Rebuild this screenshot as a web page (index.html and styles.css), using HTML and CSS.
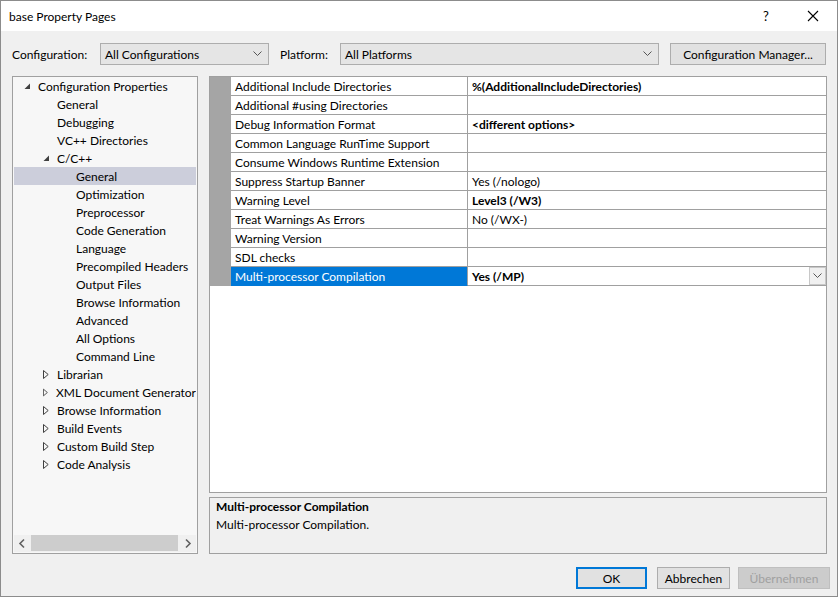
FILE: index.html
```html
<!DOCTYPE html>
<html>
<head>
<meta charset="utf-8">
<link rel="stylesheet" href="styles.css">
</head>
<body>
<div class="window">
  <div class="titlebar">
    <span class="title">base Property Pages</span>
    <span class="tb-help">?</span>
    <span class="tb-close"><svg width="12" height="12" viewBox="0 0 12 12"><path d="M1 1L11 11M11 1L1 11" stroke="#000" stroke-width="1.1" fill="none"/></svg></span>
  </div>
  <div class="body">
    <div class="configrow">
      <span class="lbl">Configuration:</span>
      <div class="combo combo-config"><span>All Configurations</span><svg class="chev" width="9" height="6" viewBox="0 0 9 6"><path d="M0.5 0.5L4.5 4.5L8.5 0.5" stroke="#555" fill="none"/></svg></div>
      <span class="lbl lbl-plat">Platform:</span>
      <div class="combo combo-plat"><span>All Platforms</span><svg class="chev" width="9" height="6" viewBox="0 0 9 6"><path d="M0.5 0.5L4.5 4.5L8.5 0.5" stroke="#555" fill="none"/></svg></div>
      <div class="btn btn-cfgmgr">Configuration Manager...</div>
    </div>
    <div class="main">
      <div class="tree">
        <div class="tree-items">
          <div class="ti l0"><svg class="exp" width="7" height="7" viewBox="0 0 7 7"><path d="M6 0.5V6H0.5Z" fill="#404040"/></svg><span>Configuration Properties</span></div>
          <div class="ti l1"><span>General</span></div>
          <div class="ti l1"><span>Debugging</span></div>
          <div class="ti l1"><span>VC++ Directories</span></div>
          <div class="ti l1 node"><svg class="exp" width="7" height="7" viewBox="0 0 7 7"><path d="M6 0.5V6H0.5Z" fill="#404040"/></svg><span>C/C++</span></div>
          <div class="ti l2 sel"><span>General</span></div>
          <div class="ti l2"><span>Optimization</span></div>
          <div class="ti l2"><span>Preprocessor</span></div>
          <div class="ti l2"><span>Code Generation</span></div>
          <div class="ti l2"><span>Language</span></div>
          <div class="ti l2"><span>Precompiled Headers</span></div>
          <div class="ti l2"><span>Output Files</span></div>
          <div class="ti l2"><span>Browse Information</span></div>
          <div class="ti l2"><span>Advanced</span></div>
          <div class="ti l2"><span>All Options</span></div>
          <div class="ti l2"><span>Command Line</span></div>
          <div class="ti l1 node"><svg class="col" width="6" height="9" viewBox="0 0 6 9"><path d="M0.5 0.5L5.2 4.5L0.5 8.5Z" fill="none" stroke="#404040"/></svg><span>Librarian</span></div>
          <div class="ti l1 node"><svg class="col" width="6" height="9" viewBox="0 0 6 9"><path d="M0.5 0.5L5.2 4.5L0.5 8.5Z" fill="none" stroke="#404040"/></svg><span>XML Document Generator</span></div>
          <div class="ti l1 node"><svg class="col" width="6" height="9" viewBox="0 0 6 9"><path d="M0.5 0.5L5.2 4.5L0.5 8.5Z" fill="none" stroke="#404040"/></svg><span>Browse Information</span></div>
          <div class="ti l1 node"><svg class="col" width="6" height="9" viewBox="0 0 6 9"><path d="M0.5 0.5L5.2 4.5L0.5 8.5Z" fill="none" stroke="#404040"/></svg><span>Build Events</span></div>
          <div class="ti l1 node"><svg class="col" width="6" height="9" viewBox="0 0 6 9"><path d="M0.5 0.5L5.2 4.5L0.5 8.5Z" fill="none" stroke="#404040"/></svg><span>Custom Build Step</span></div>
          <div class="ti l1 node"><svg class="col" width="6" height="9" viewBox="0 0 6 9"><path d="M0.5 0.5L5.2 4.5L0.5 8.5Z" fill="none" stroke="#404040"/></svg><span>Code Analysis</span></div>
        </div>
        <div class="hscroll">
          <svg class="sarrow" width="17" height="17" viewBox="0 0 17 17"><path d="M10 4.5L6 8.5L10 12.5" stroke="#606060" stroke-width="1.6" fill="none"/></svg>
          <div class="strack"><div class="sthumb"></div></div>
          <svg class="sarrow" width="17" height="17" viewBox="0 0 17 17"><path d="M7 4.5L11 8.5L7 12.5" stroke="#606060" stroke-width="1.6" fill="none"/></svg>
        </div>
      </div>
      <div class="rightcol">
        <div class="grid">
          <div class="rows">
            <div class="row"><div class="gut"></div><div class="nm">Additional Include Directories</div><div class="vl b">%(AdditionalIncludeDirectories)</div></div>
            <div class="row"><div class="gut"></div><div class="nm">Additional #using Directories</div><div class="vl"></div></div>
            <div class="row"><div class="gut"></div><div class="nm">Debug Information Format</div><div class="vl b">&lt;different options&gt;</div></div>
            <div class="row"><div class="gut"></div><div class="nm">Common Language RunTime Support</div><div class="vl"></div></div>
            <div class="row"><div class="gut"></div><div class="nm">Consume Windows Runtime Extension</div><div class="vl"></div></div>
            <div class="row"><div class="gut"></div><div class="nm">Suppress Startup Banner</div><div class="vl">Yes (/nologo)</div></div>
            <div class="row"><div class="gut"></div><div class="nm">Warning Level</div><div class="vl b">Level3 (/W3)</div></div>
            <div class="row"><div class="gut"></div><div class="nm">Treat Warnings As Errors</div><div class="vl">No (/WX-)</div></div>
            <div class="row"><div class="gut"></div><div class="nm">Warning Version</div><div class="vl"></div></div>
            <div class="row"><div class="gut"></div><div class="nm">SDL checks</div><div class="vl"></div></div>
            <div class="row selrow"><div class="gut"></div><div class="nm">Multi-processor Compilation</div><div class="vl b"><span class="grow">Yes (/MP)</span><div class="ddbtn"><svg width="9" height="6" viewBox="0 0 9 6"><path d="M0.5 0.5L4.5 4.5L8.5 0.5" stroke="#555" fill="none"/></svg></div></div></div>
          </div>
        </div>
        <div class="desc">
          <div class="desc-title">Multi-processor Compilation</div>
          <div class="desc-text">Multi-processor Compilation.</div>
        </div>
      </div>
    </div>
    <div class="buttons">
      <div class="btn btn-ok">OK</div>
      <div class="btn btn-cancel">Abbrechen</div>
      <div class="btn btn-apply">Übernehmen</div>
    </div>
  </div>
</div>
</body>
</html>
```
FILE: styles.css
```css
* { box-sizing: border-box; }
html, body { margin: 0; padding: 0; }
body {
  font-family: Lato, "Noto Sans", sans-serif;
  font-size: 12px;
  color: #000;
  background: #f0f0f0;
}
.window {
  width: 838px;
  height: 597px;
  border: 1px solid #8c8c8c;
  display: flex;
  flex-direction: column;
  background: #f0f0f0;
}
.titlebar {
  height: 30px;
  background: #fff;
  display: flex;
  align-items: center;
  padding-left: 8px;
  flex-shrink: 0;
}
.title { flex: 1; font-size: 12px; }
.tb-help { width: 46px; text-align: center; font-size: 13px; margin-right: 1px; }
.tb-close { width: 46px; display: flex; justify-content: center; align-items: center; margin-right: 1px; }
.body {
  flex: 1;
  display: flex;
  flex-direction: column;
  padding: 12px 10px 0 11px;
}
.configrow {
  display: flex;
  align-items: center;
  height: 22px;
}
.lbl { width: 88px; }
.lbl-plat { width: 60px; margin-left: 11px; }
.combo {
  height: 22px;
  border: 1px solid #adadad;
  background: #e5e5e5;
  display: flex;
  align-items: center;
  padding: 0 6px 0 4px;
}
.combo span { flex: 1; }
.combo-config { width: 169px; }
.combo-plat { width: 319px; }
.btn {
  height: 22px;
  border: 1px solid #adadad;
  background: #e1e1e1;
  display: flex;
  align-items: center;
  justify-content: center;
}
.btn-cfgmgr { width: 156px; margin-left: 11px; }
.main {
  display: flex;
  margin-top: 11px;
  height: 478px;
}
.tree {
  width: 186px;
  border: 1px solid #a0a0a0;
  background: #f7f7f7;
  display: flex;
  flex-direction: column;
  padding: 0 1px 1px 1px;
}
.tree-items { flex: 1; }
.ti {
  height: 18px;
  display: flex;
  align-items: center;
  white-space: nowrap;
  overflow: hidden;
}
.ti.l0 { padding-left: 10px; }
.ti.l1 { padding-left: 43px; }
.ti.l1.node { padding-left: 29px; }
.ti.l2 { padding-left: 62px; }
.ti .exp { margin-right: 7px; }
.ti .col { margin-right: 8px; }
.ti.sel { background: #cccedb; }
.hscroll {
  height: 17px;
  display: flex;
  align-items: center;
  background: #f0f0f0;
}
.strack { flex: 1; height: 17px; }
.sthumb { width: 147px; height: 16px; background: #cdcdcd; }
.rightcol {
  flex: 1;
  margin-left: 11px;
  display: flex;
  flex-direction: column;
}
.grid {
  height: 417px;
  border: 1px solid #a0a0a0;
  background: #fff;
}
.row {
  display: flex;
  height: 19px;
}
.gut { width: 21px; background: #a5a5a5; }
.nm {
  width: 237px;
  border-right: 1px solid #a0a0a0;
  border-bottom: 1px solid #a0a0a0;
  padding-left: 4px;
  display: flex;
  align-items: center;
  white-space: nowrap;
}
.vl {
  flex: 1;
  border-bottom: 1px solid #a0a0a0;
  padding-left: 4px;
  display: flex;
  align-items: center;
  white-space: nowrap;
}
.b { font-weight: bold; }
.selrow .nm { background: #0078d7; color: #fff; border-bottom-color: #0078d7; }
.grow { flex: 1; }
.ddbtn {
  width: 17px;
  height: 18px;
  border: 1px solid #c8c8c8;
  background: #f0f0f0;
  display: flex;
  align-items: center;
  justify-content: center;
}
.desc {
  margin-top: 4px;
  height: 57px;
  border: 1px solid #a0a0a0;
  padding: 1px 6px;
}
.desc-title { font-weight: bold; line-height: 16px; }
.desc-text { line-height: 19px; }
.buttons {
  display: flex;
  justify-content: flex-end;
  margin-top: 13px;
  margin-right: -3px;
}
.btn-ok { width: 71px; border: 2px solid #0078d7; }
.btn-cancel { width: 73px; margin-left: 10px; }
.btn-apply { width: 92px; margin-left: 8px; color: #a0a0a0; border-color: #bfbfbf; background: #cccccc; }
```
